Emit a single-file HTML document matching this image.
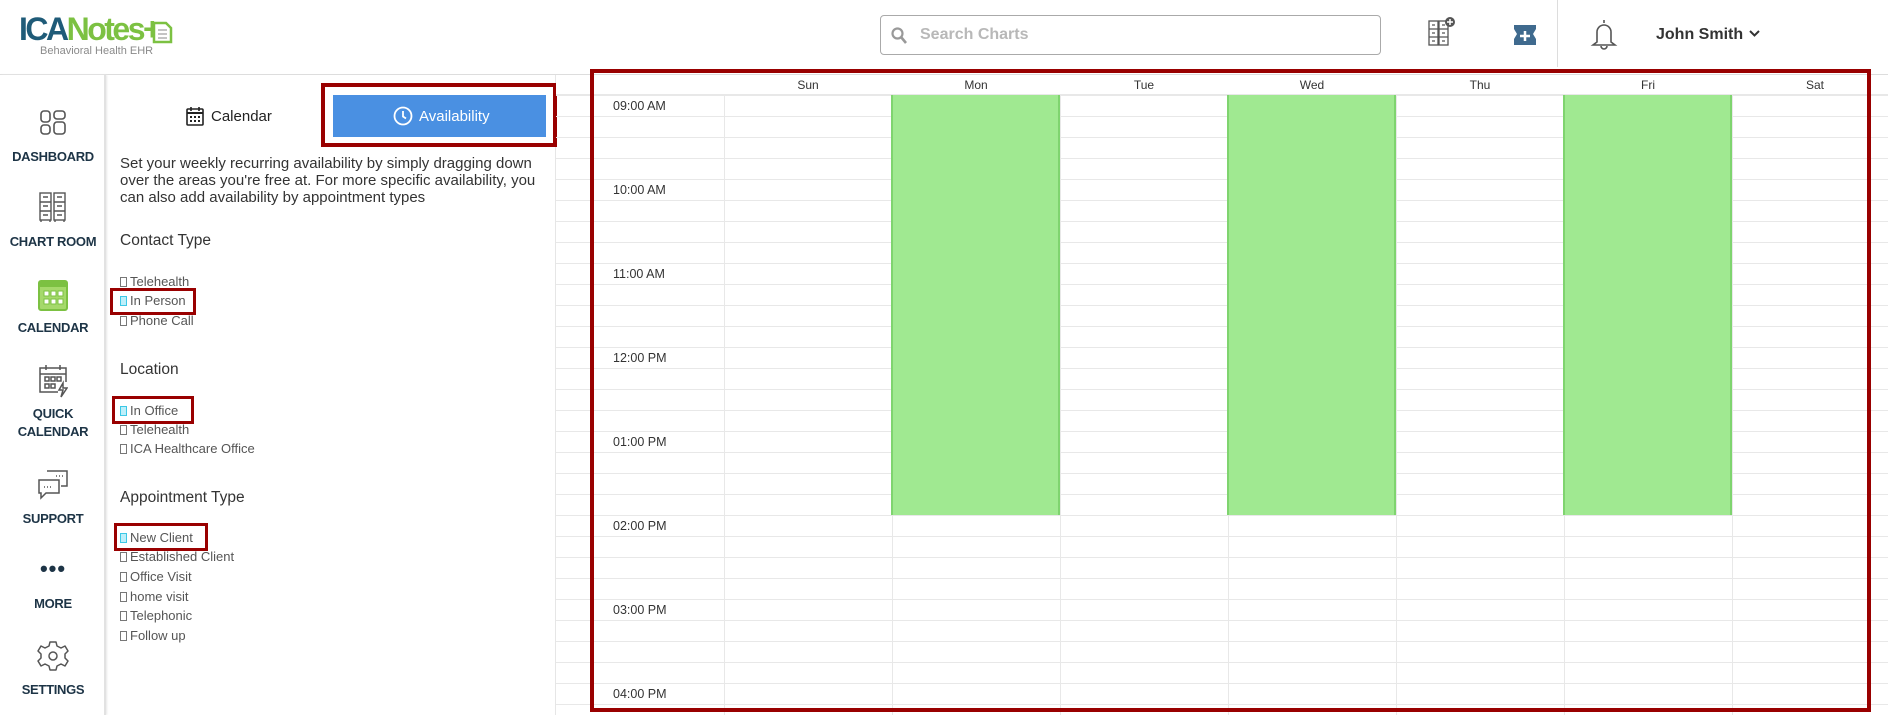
<!DOCTYPE html>
<html><head><meta charset="utf-8"><style>
*{margin:0;padding:0;box-sizing:border-box}
body{width:1888px;height:715px;overflow:hidden;background:#fff;font-family:"Liberation Sans",sans-serif;position:relative;color:#333}
.a{position:absolute}
.hdr{left:0;top:0;width:1888px;height:75px;border-bottom:1px solid #ddd;background:#fff}
.side{left:0;top:75px;width:106px;height:640px;border-right:2px solid #e2e2e2;box-shadow:1px 0 2px #e8e8e8}
.sl{width:106px;text-align:center;font-size:13px;font-weight:bold;color:#1d3446;letter-spacing:-0.3px}
.grid{left:556px;top:74px;width:1332px;height:641px;border-top:1px solid #ddd;
background-image:repeating-linear-gradient(to bottom,transparent 0,transparent 20px,#e8e8e8 20px,#e8e8e8 21px);background-position:0 0}
.vl{top:95px;width:1px;height:620px;background:#e8e8e8}
.day{top:78px;font-size:12px;color:#333;width:168px;text-align:center}
.tm{left:613px;font-size:12.5px;color:#333}
.gr{top:95px;width:169px;height:420px;background:#a0e991;border-left:2px solid #7fd46f;border-right:2px solid #7fd46f}
.it{left:120px;font-size:13px;color:#555}
.it span{display:inline-block;width:7px;height:10px;border:1px solid #777;margin-right:3px;vertical-align:-1px}
.it.c span{border-color:#3cc8e6;background:#bdeffa}
.h3{left:120px;font-size:15.5px;color:#333}
.rb{border:4px solid #990000}
</style></head><body>
<div class="a hdr"></div>
<!-- logo -->
<div class="a" style="left:19px;top:11px;font-size:32px;font-weight:bold;letter-spacing:-2.5px;line-height:36px"><span style="color:#1f5b78">ICA</span><span style="color:#7cc142">Notes+</span></div>
<svg class="a" style="left:151px;top:20px" width="22" height="24" viewBox="0 0 22 24"><path d="M3 3h12l5 5v14H3z" fill="#fff" stroke="#7cc142" stroke-width="2.5"/><path d="M7 10h9M7 14h9M7 18h9" stroke="#888" stroke-width="1"/></svg>
<div class="a" style="left:40px;top:45px;font-size:11px;color:#8a8a8a">Behavioral Health EHR</div>
<!-- search -->
<div class="a" style="left:880px;top:15px;width:501px;height:40px;border:1px solid #aaa;border-radius:4px"></div>
<svg class="a" style="left:891px;top:27px" width="16" height="17" viewBox="0 0 16 17"><circle cx="6.5" cy="6.5" r="5" fill="none" stroke="#999" stroke-width="2.2"/><path d="M10 10l5 6" stroke="#999" stroke-width="2.6"/></svg>
<div class="a" style="left:920px;top:26px;font-size:16px;font-weight:bold;color:#b8b8b8">Search Charts</div>
<!-- header icons -->
<svg class="a" style="left:1428px;top:17px" width="28" height="30" viewBox="0 0 28 30"><g fill="none" stroke="#555" stroke-width="1.3"><rect x="1" y="4" width="9" height="24"/><rect x="11" y="4" width="9" height="24"/><path d="M1 12h9M1 20h9M11 12h9M11 20h9M4 8h3M4 16h3M4 24h3M14 8h3M14 16h3M14 24h3"/></g><circle cx="22" cy="5" r="5" fill="#555"/><path d="M22 2v6M19 5h6" stroke="#fff" stroke-width="1.5"/></svg>
<svg class="a" style="left:1512px;top:19px" width="26" height="32" viewBox="0 0 26 32"><path d="M6 1l3 5h-7v4l3 5-3 5v6h22v-6l-3-5 3-5v-4H9z" fill="#3f6a8e"/><path d="M13 12v10M8 17h10" stroke="#fff" stroke-width="2.5"/></svg>
<div class="a" style="left:1557px;top:0;width:1px;height:67px;background:#ddd"></div>
<svg class="a" style="left:1589px;top:18px" width="30" height="32" viewBox="0 0 30 32"><path d="M15 2v3M8 24V14a7 7 0 0 1 14 0v10l4 3H4z" fill="none" stroke="#555" stroke-width="1.6"/><path d="M12 28a3 3 0 0 0 6 0" fill="none" stroke="#555" stroke-width="1.6"/></svg>
<div class="a" style="left:1656px;top:26px;font-size:16px;font-weight:bold;color:#333">John Smith</div>
<svg class="a" style="left:1749px;top:30px" width="11" height="8" viewBox="0 0 11 8"><path d="M1 1l4.5 4.5L10 1" fill="none" stroke="#333" stroke-width="2"/></svg>
<!-- sidebar -->
<div class="a side"></div>
<svg class="a" style="left:40px;top:110px" width="26" height="25" viewBox="0 0 26 25"><g fill="none" stroke="#555" stroke-width="1.6"><rect x="1" y="1" width="9" height="11" rx="3"/><rect x="14" y="1" width="11" height="8" rx="3"/><rect x="1" y="15" width="9" height="9" rx="3"/><rect x="14" y="12" width="11" height="12" rx="3"/></g></svg>
<div class="a sl" style="top:149px">DASHBOARD</div>
<svg class="a" style="left:38px;top:191px" width="30" height="32" viewBox="0 0 30 32"><g fill="none" stroke="#555" stroke-width="1.4"><rect x="2" y="2" width="11" height="27"/><rect x="16" y="2" width="11" height="27"/><path d="M2 11h11M2 20h11M16 11h11M16 20h11M5 6h5M5 15h5M5 24h5M19 6h5M19 15h5M19 24h5M3 29v2M12 29v2M17 29v2M26 29v2"/></g></svg>
<div class="a sl" style="top:234px">CHART ROOM</div>
<svg class="a" style="left:38px;top:279px" width="30" height="32" viewBox="0 0 30 32"><rect x="1" y="2" width="28" height="29" rx="2" fill="#a5d96b" stroke="#7cc142" stroke-width="2"/><rect x="1" y="2" width="28" height="6" fill="#7cc142"/><g fill="#fff" stroke="#7cc142"><rect x="6" y="12" width="5" height="5"/><rect x="13" y="12" width="5" height="5"/><rect x="20" y="12" width="5" height="5"/><rect x="6" y="20" width="5" height="5"/><rect x="13" y="20" width="5" height="5"/><rect x="20" y="20" width="5" height="5"/></g></svg>
<div class="a sl" style="top:320px">CALENDAR</div>
<svg class="a" style="left:38px;top:364px" width="30" height="34" viewBox="0 0 30 34"><g fill="none" stroke="#555" stroke-width="1.5"><path d="M20 28H2V4h26v14"/><path d="M2 10h26M8 1v5M22 1v5"/><rect x="7" y="13" width="4" height="4"/><rect x="13" y="13" width="4" height="4"/><rect x="19" y="13" width="4" height="4"/><rect x="7" y="20" width="4" height="4"/><rect x="13" y="20" width="4" height="4"/><path d="M25 19l-4 7h4l-2 7 6-9h-4z"/></g></svg>
<div class="a sl" style="top:406px">QUICK</div>
<div class="a sl" style="top:424px">CALENDAR</div>
<svg class="a" style="left:37px;top:470px" width="32" height="30" viewBox="0 0 32 30"><g fill="none" stroke="#555" stroke-width="1.5"><path d="M10 1h20v15h-6"/><path d="M2 10h20v13H9l-5 5v-5H2z"/><path d="M22 6h1M25 6h1M19 6h1M7 17h1M10 17h1M13 17h1"/></g></svg>
<div class="a sl" style="top:511px">SUPPORT</div>
<div class="a sl" style="top:556px;font-size:22px;letter-spacing:1px">•••</div>
<div class="a sl" style="top:596px">MORE</div>
<svg class="a" style="left:37px;top:640px" width="32" height="32" viewBox="-16 -16 32 32"><g fill="none" stroke="#555" stroke-width="1.5" stroke-linejoin="round"><path d="M-3,-14 L3,-14 L4,-10 L8,-8 L12,-10 L15,-5 L12,-2 L12,2 L15,5 L12,10 L8,8 L4,10 L3,14 L-3,14 L-4,10 L-8,8 L-12,10 L-15,5 L-12,2 L-12,-2 L-15,-5 L-12,-10 L-8,-8 L-4,-10 Z"/><circle r="4"/></g></svg>
<div class="a sl" style="top:682px">SETTINGS</div>
<!-- panel -->
<div class="a" style="left:555px;top:75px;width:1px;height:640px;background:#e6e6e6"></div>
<svg class="a" style="left:186px;top:106px" width="18" height="20" viewBox="0 0 18 20"><rect x="1" y="3" width="16" height="16" rx="1" fill="none" stroke="#222" stroke-width="1.6"/><path d="M1 7h16" stroke="#222" stroke-width="2"/><path d="M5 1v4M13 1v4" stroke="#222" stroke-width="1.6"/><g fill="#222"><rect x="4" y="10" width="2" height="2"/><rect x="8" y="10" width="2" height="2"/><rect x="12" y="10" width="2" height="2"/><rect x="4" y="14" width="2" height="2"/><rect x="8" y="14" width="2" height="2"/><rect x="12" y="14" width="2" height="2"/></g></svg>
<div class="a" style="left:211px;top:108px;font-size:15px;color:#222">Calendar</div>
<div class="a" style="left:333px;top:95px;width:213px;height:42px;background:#4a90e2"></div>
<svg class="a" style="left:393px;top:106px" width="20" height="20" viewBox="0 0 20 20"><circle cx="10" cy="10" r="8.5" fill="none" stroke="#fff" stroke-width="1.8"/><path d="M10 5v5.5l3 2" fill="none" stroke="#fff" stroke-width="1.8"/></svg>
<div class="a" style="left:419px;top:108px;font-size:15px;color:#fff">Availability</div>
<div class="a rb" style="left:321px;top:83px;width:236px;height:64px"></div>
<div class="a" style="left:120px;top:155px;width:430px;font-size:15px;line-height:17px;color:#333">Set your weekly recurring availability by simply dragging down over the areas you're free at. For more specific availability, you can also add availability by appointment types</div>
<div class="a h3" style="top:232px">Contact Type</div>
<div class="a it" style="top:274px"><span></span>Telehealth</div>
<div class="a it c" style="top:293px"><span></span>In Person</div>
<div class="a it" style="top:313px"><span></span>Phone Call</div>
<div class="a rb" style="left:110px;top:288px;width:86px;height:27px;border-width:3px"></div>
<div class="a h3" style="top:361px">Location</div>
<div class="a it c" style="top:403px"><span></span>In Office</div>
<div class="a it" style="top:422px"><span></span>Telehealth</div>
<div class="a it" style="top:441px"><span></span>ICA Healthcare Office</div>
<div class="a rb" style="left:112px;top:396px;width:82px;height:28px;border-width:3px"></div>
<div class="a h3" style="top:489px">Appointment Type</div>
<div class="a it c" style="top:530px"><span></span>New Client</div>
<div class="a it" style="top:549px"><span></span>Established Client</div>
<div class="a it" style="top:569px"><span></span>Office Visit</div>
<div class="a it" style="top:589px"><span></span>home visit</div>
<div class="a it" style="top:608px"><span></span>Telephonic</div>
<div class="a it" style="top:628px"><span></span>Follow up</div>
<div class="a rb" style="left:114px;top:523px;width:94px;height:28px;border-width:3px"></div>
<!-- grid -->
<div class="a grid"></div>
<div class="a" style="left:556px;top:74px;width:1332px;height:21px;background:#fff;border-top:1px solid #ddd;border-bottom:1px solid #e8e8e8"></div>
<div class="a vl" style="left:724px"></div><div class="a vl" style="left:892px"></div><div class="a vl" style="left:1060px"></div><div class="a vl" style="left:1228px"></div><div class="a vl" style="left:1396px"></div><div class="a vl" style="left:1564px"></div><div class="a vl" style="left:1732px"></div>
<div class="a day" style="left:724px">Sun</div><div class="a day" style="left:892px">Mon</div><div class="a day" style="left:1060px">Tue</div><div class="a day" style="left:1228px">Wed</div><div class="a day" style="left:1396px">Thu</div><div class="a day" style="left:1564px">Fri</div><div class="a day" style="left:1732px;width:166px">Sat</div>
<div class="a gr" style="left:891px"></div><div class="a gr" style="left:1227px"></div><div class="a gr" style="left:1563px"></div>
<div class="a tm" style="top:99px">09:00 AM</div>
<div class="a tm" style="top:183px">10:00 AM</div>
<div class="a tm" style="top:267px">11:00 AM</div>
<div class="a tm" style="top:351px">12:00 PM</div>
<div class="a tm" style="top:435px">01:00 PM</div>
<div class="a tm" style="top:519px">02:00 PM</div>
<div class="a tm" style="top:603px">03:00 PM</div>
<div class="a tm" style="top:687px">04:00 PM</div>
<div class="a rb" style="left:590px;top:69px;width:1281px;height:643px"></div>
</body></html>
